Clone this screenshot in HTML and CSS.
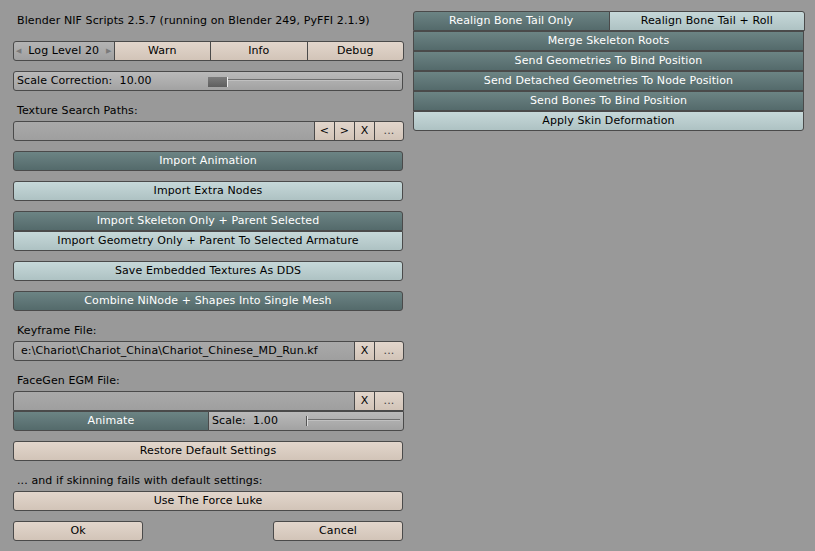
FILE: index.html
```html
<!DOCTYPE html>
<html>
<head>
<meta charset="utf-8">
<link rel="stylesheet" href="styles.css">
</head>
<body>
<div class="screen">
  <div class="col left">
    <div class="label">Blender NIF Scripts 2.5.7 (running on Blender 249, PyFFI 2.1.9)</div>
    <div class="row gap">
      <div class="btn num first"><span class="arr">&#9664;</span><span class="numtxt">Log Level 20</span><span class="arr">&#9654;</span></div>
      <div class="btn beige">Warn</div>
      <div class="btn beige">Info</div>
      <div class="btn beige last">Debug</div>
    </div>
    <div class="row gap">
      <div class="btn slider solo">
        <span class="slabel">Scale Correction:&nbsp; 10.00</span>
        <span class="strack"><span class="thumb"></span><span class="line"></span></span>
      </div>
    </div>
    <div class="label gap">Texture Search Paths:</div>
    <div class="row">
      <div class="btn text first"></div>
      <div class="btn beige small">&lt;</div>
      <div class="btn beige small">&gt;</div>
      <div class="btn beige small">X</div>
      <div class="btn beige dots last">...</div>
    </div>
    <div class="row gap"><div class="btn dark solo">Import Animation</div></div>
    <div class="row gap"><div class="btn light solo">Import Extra Nodes</div></div>
    <div class="stack gap">
      <div class="btn dark top">Import Skeleton Only + Parent Selected</div>
      <div class="btn light bottom">Import Geometry Only + Parent To Selected Armature</div>
    </div>
    <div class="row gap"><div class="btn light solo">Save Embedded Textures As DDS</div></div>
    <div class="row gap"><div class="btn dark solo">Combine NiNode + Shapes Into Single Mesh</div></div>
    <div class="label gap">Keyframe File:</div>
    <div class="row">
      <div class="btn text first">e:\Chariot\Chariot_China\Chariot_Chinese_MD_Run.kf</div>
      <div class="btn beige small">X</div>
      <div class="btn beige dots last">...</div>
    </div>
    <div class="label gap">FaceGen EGM File:</div>
    <div class="row">
      <div class="btn text tl"></div>
      <div class="btn beige small">X</div>
      <div class="btn beige dots tr">...</div>
    </div>
    <div class="row">
      <div class="btn dark half bl">Animate</div>
      <div class="btn slider half br">
        <span class="slabel">Scale:&nbsp; 1.00</span>
        <span class="strack"><span class="thin"></span><span class="line"></span></span>
      </div>
    </div>
    <div class="row gap"><div class="btn beige solo">Restore Default Settings</div></div>
    <div class="label gap">... and if skinning fails with default settings:</div>
    <div class="row"><div class="btn beige solo">Use The Force Luke</div></div>
    <div class="row gap split">
      <div class="btn beige solo okc">Ok</div>
      <div class="btn beige solo okc">Cancel</div>
    </div>
  </div>
  <div class="col right">
    <div class="row">
      <div class="btn dark half tl">Realign Bone Tail Only</div>
      <div class="btn light half tr">Realign Bone Tail + Roll</div>
    </div>
    <div class="btn dark mid">Merge Skeleton Roots</div>
    <div class="btn dark mid">Send Geometries To Bind Position</div>
    <div class="btn dark mid">Send Detached Geometries To Node Position</div>
    <div class="btn dark mid">Send Bones To Bind Position</div>
    <div class="btn light bottom">Apply Skin Deformation</div>
  </div>
</div>
</body>
</html>
```

FILE: styles.css
```css
html, body {
  margin: 0;
  padding: 0;
  background: #999999;
}
body {
  width: 815px;
  height: 551px;
  overflow: hidden;
  font-family: "DejaVu Sans", "Liberation Sans", sans-serif;
  font-size: 11px;
  letter-spacing: 0.1px;
  color: #000;
}
.screen {
  display: flex;
  align-items: flex-start;
  padding: 11px 0 0 13px;
  gap: 10px;
}
.col {
  display: flex;
  flex-direction: column;
}
.left { width: 390px; }
.right { width: 391px; }
.label {
  height: 20px;
  line-height: 20px;
  padding-left: 4px;
  white-space: nowrap;
}
.gap { margin-top: 10px; }
.row {
  display: flex;
  height: 20px;
  flex: none;
}
.stack {
  display: flex;
  flex-direction: column;
}
.btn {
  box-sizing: border-box;
  height: 20px;
  line-height: 18px;
  border: 1px solid #4a4a4a;
  margin-right: -1px;
  text-align: center;
  white-space: nowrap;
  overflow: hidden;
  flex: 1 1 0;
  position: relative;
}
.col > .btn, .stack > .btn { flex: none; margin-right: 0; }
.beige {
  background: linear-gradient(#e2d6cc, #d2c4b8);
  color: #000;
}
.dark {
  background: linear-gradient(#6c8484, #546a6b);
  color: #fff;
}
.light {
  background: linear-gradient(#c6d8d9, #aec2c3);
  color: #000;
}
.num {
  background: linear-gradient(#b4b4b4, #a0a0a0);
  display: flex;
  align-items: center;
  justify-content: space-between;
  padding: 0 2px;
}
.arr {
  font-size: 7px;
  color: #7a7a7a;
  line-height: 18px;
}
.numtxt { flex: 1; text-align: center; }
.text {
  background: linear-gradient(#a9a9a9, #9f9f9f);
  text-align: left;
  padding-left: 7px;
}
.slider {
  background: linear-gradient(#bababa, #a2a2a2);
  display: flex;
  text-align: left;
}
.slabel {
  flex: 1 1 0;
  padding-left: 3px;
}
.strack {
  flex: 1 1 0;
  display: flex;
  align-items: center;
  padding-right: 3px;
}
.thumb {
  width: 19px;
  height: 10px;
  background: linear-gradient(#7c7c7c, #5e5e5e);
  border-right: 1px solid #eee;
  margin-top: 1px;
}
.thin {
  width: 1px;
  height: 10px;
  background: #555;
  border-right: 1px solid #ddd;
}
.line {
  flex: 1;
  height: 1px;
  background: #6e6e6e;
  border-bottom: 1px solid #c0c0c0;
  margin-top: -2px;
}
.small { flex: 0 0 21px; }
.dots { flex: 0 0 30px; color: #444; }
.half { flex: 1 1 0; }
.okc { flex: 0 0 130px; }
.split { justify-content: space-between; }
.first { border-radius: 3px 0 0 3px; }
.last { border-radius: 0 3px 3px 0; }
.solo { border-radius: 3px; margin-right: 0; }
.top { border-radius: 3px 3px 0 0; }
.bottom { border-radius: 0 0 3px 3px; }
.tl { border-radius: 3px 0 0 0; }
.tr { border-radius: 0 3px 0 0; }
.bl { border-radius: 0 0 0 3px; }
.br { border-radius: 0 0 3px 0; }
.mid { border-radius: 0; }
```
